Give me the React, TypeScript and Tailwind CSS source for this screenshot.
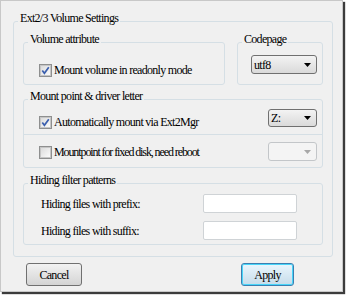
import { ReactElement } from 'react';

function Check({ checked }: { checked: boolean }): ReactElement {
  return (
    <span className="flex h-[13px] w-[13px] shrink-0 items-center justify-center border border-[#8e8f8f] bg-[#f4f4f4]">
      <span className="flex h-[11px] w-[11px] items-center justify-center border border-[#c6c6c6] bg-gradient-to-br from-[#dcdcdc] to-[#fbfbfb]">
        {checked && (
          <svg width="9" height="9" viewBox="0 0 9 9">
            <path d="M1.3 4.6 L3.4 7.3 L7.8 1.2" fill="none" stroke="#3b5fae" strokeWidth="1.7" />
          </svg>
        )}
      </span>
    </span>
  );
}

function Dropdown({ value, width, height, disabled }: { value?: string; width: string; height: string; disabled?: boolean }): ReactElement {
  return (
    <div
      className={
        disabled
          ? `flex ${width} ${height} items-center justify-end rounded-[3px] border border-[#c3c6c9] bg-[#f4f4f4] pr-[5px]`
          : `flex ${width} ${height} items-center justify-between rounded-[3px] border border-[#707070] bg-gradient-to-b from-[#f3f3f3] to-[#dadada] pl-[2px] pr-[5px]`
      }
    >
      {value && <span className="leading-[14px]">{value}</span>}
      <svg width="7" height="4" viewBox="0 0 7 4">
        <path d="M0 0 H7 L3.5 4 Z" fill={disabled ? '#a8a8a8' : '#000'} />
      </svg>
    </div>
  );
}

function Legend({ children }: { children: string }): ReactElement {
  return <legend className="ml-[4px] px-[2px] pb-[6px] leading-[14px]">{children}</legend>;
}

export default function App(): ReactElement {
  return (
    <div className="h-[298px] w-[347px] bg-white [font-family:Liberation_Serif,serif] text-[12px] tracking-[-0.7px] text-black">
      <div className="flex h-[292px] w-[343px] flex-col border border-[#c8c8c8] bg-[#f0f0f0] shadow-[2px_2px_1px_#3c3c3c]">
        {/* Ext2/3 Volume Settings */}
        <fieldset className="ml-[12px] mt-[10px] h-[246px] w-[320px] rounded-[3px] border border-[#d5dfe5]">
          <Legend>Ext2/3 Volume Settings</Legend>
          <div className="flex flex-col px-[9px] pb-[11px]">
            <div className="mt-[1px] flex gap-[12px]">
              <fieldset className="h-[53px] w-[202px] rounded-[3px] border border-[#d5dfe5]">
                <Legend>Volume attribute</Legend>
                <label className="mt-[11px] flex items-center gap-[2px] pl-[15px] leading-[14px]">
                  <Check checked />
                  <span>Mount volume in readonly mode</span>
                </label>
              </fieldset>
              <fieldset className="h-[53px] w-[86px] rounded-[3px] border border-[#d5dfe5]">
                <Legend>Codepage</Legend>
                <div className="pl-[13px] pt-[3px]">
                  <Dropdown value="utf8" width="w-[66px]" height="h-[19px]" />
                </div>
              </fieldset>
            </div>

            <fieldset className="mt-[4px] h-[79px] rounded-[3px] border border-[#d5dfe5]">
              <Legend>Mount point &amp; driver letter</Legend>
              <div className="flex h-[25px] items-start justify-between pl-[15px] pr-[5px]">
                <label className="mt-[6px] flex items-center gap-[2px] leading-[14px]">
                  <Check checked />
                  <span>Automatically mount via Ext2Mgr</span>
                </label>
                <Dropdown value="Z:" width="w-[49px]" height="h-[18px]" />
              </div>
              <div className="h-px bg-[#d5dfe5]" />
              <div className="flex h-[32px] items-start justify-between pl-[15px] pr-[5px]">
                <label className="mt-[10px] flex items-center gap-[2px] leading-[14px]">
                  <Check checked={false} />
                  <span className="tracking-[-1.1px]">Mountpoint for fixed disk, need reboot</span>
                </label>
                <div className="mt-[7px]">
                  <Dropdown width="w-[49px]" height="h-[19px]" disabled />
                </div>
              </div>
            </fieldset>

            <fieldset className="mt-[5px] h-[72px] rounded-[3px] border border-[#d5dfe5]">
              <Legend>Hiding filter patterns</Legend>
              <div className="flex flex-col gap-[8px] pl-[17px] pr-[25px] pt-[1px]">
                <div className="flex items-center justify-between">
                  <span className="leading-[14px]">Hiding files with prefix:</span>
                  <div className="h-[19px] w-[94px] rounded-[2px] border border-[#cfd3d6] bg-white" />
                </div>
                <div className="flex items-center justify-between">
                  <span className="leading-[14px]">Hiding files with suffix:</span>
                  <div className="h-[19px] w-[94px] rounded-[2px] border border-[#cfd3d6] bg-white" />
                </div>
              </div>
            </fieldset>
          </div>
        </fieldset>

        {/* Buttons */}
        <div className="mt-[6px] flex justify-between pl-[25px] pr-[48px]">
          <button className="h-[23px] w-[56px] rounded-[3px] border border-[#707070] bg-gradient-to-b from-[#f2f2f2] to-[#d4d4d4] leading-[14px]">
            Cancel
          </button>
          <button className="h-[23px] w-[53px] rounded-[3px] border border-[#3c7fb1] bg-gradient-to-b from-[#eaf6fd] to-[#c6dcea] leading-[14px] shadow-[inset_0_0_0_1px_#48d5f9]">
            Apply
          </button>
        </div>
      </div>
    </div>
  );
}
